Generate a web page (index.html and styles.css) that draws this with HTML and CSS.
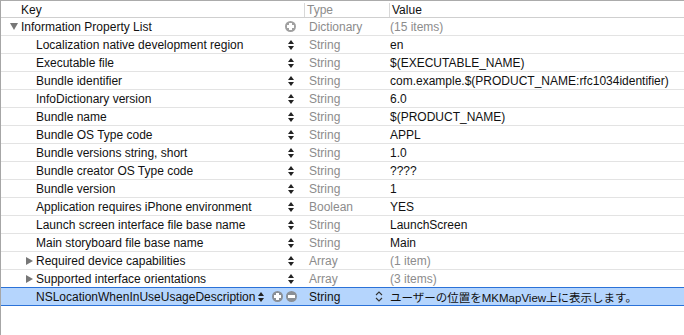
FILE: index.html
```html
<!DOCTYPE html>
<html lang="en">
<head>
  <meta charset="UTF-8" />
  <title>Info.plist</title>
  <link rel="stylesheet" href="styles.css">
</head>
<body>
  <div class="plist">
    <div class="head">
      <div class="cell key">Key</div>
      <div class="cell type sep">Type</div>
      <div class="cell value sep">Value</div>
    </div>

    <div class="row">
      <div class="cell key root"><span class="tri down"></span>Information Property List
        <span class="ctrls"><span class="btn plus"></span></span></div>
      <div class="cell type">Dictionary</div>
      <div class="cell value dim">(15 items)</div>
    </div>

    <div class="row">
      <div class="cell key child">Localization native development region<span class="ctrls"><span class="step"></span></span></div>
      <div class="cell type">String</div>
      <div class="cell value">en</div>
    </div>
    <div class="row">
      <div class="cell key child">Executable file<span class="ctrls"><span class="step"></span></span></div>
      <div class="cell type">String</div>
      <div class="cell value">$(EXECUTABLE_NAME)</div>
    </div>
    <div class="row">
      <div class="cell key child">Bundle identifier<span class="ctrls"><span class="step"></span></span></div>
      <div class="cell type">String</div>
      <div class="cell value">com.example.$(PRODUCT_NAME:rfc1034identifier)</div>
    </div>
    <div class="row">
      <div class="cell key child">InfoDictionary version<span class="ctrls"><span class="step"></span></span></div>
      <div class="cell type">String</div>
      <div class="cell value">6.0</div>
    </div>
    <div class="row">
      <div class="cell key child">Bundle name<span class="ctrls"><span class="step"></span></span></div>
      <div class="cell type">String</div>
      <div class="cell value">$(PRODUCT_NAME)</div>
    </div>
    <div class="row">
      <div class="cell key child">Bundle OS Type code<span class="ctrls"><span class="step"></span></span></div>
      <div class="cell type">String</div>
      <div class="cell value">APPL</div>
    </div>
    <div class="row">
      <div class="cell key child">Bundle versions string, short<span class="ctrls"><span class="step"></span></span></div>
      <div class="cell type">String</div>
      <div class="cell value">1.0</div>
    </div>
    <div class="row">
      <div class="cell key child">Bundle creator OS Type code<span class="ctrls"><span class="step"></span></span></div>
      <div class="cell type">String</div>
      <div class="cell value">????</div>
    </div>
    <div class="row">
      <div class="cell key child">Bundle version<span class="ctrls"><span class="step"></span></span></div>
      <div class="cell type">String</div>
      <div class="cell value">1</div>
    </div>
    <div class="row">
      <div class="cell key child">Application requires iPhone environment<span class="ctrls"><span class="step"></span></span></div>
      <div class="cell type">Boolean</div>
      <div class="cell value">YES</div>
    </div>
    <div class="row">
      <div class="cell key child">Launch screen interface file base name<span class="ctrls"><span class="step"></span></span></div>
      <div class="cell type">String</div>
      <div class="cell value">LaunchScreen</div>
    </div>
    <div class="row">
      <div class="cell key child">Main storyboard file base name<span class="ctrls"><span class="step"></span></span></div>
      <div class="cell type">String</div>
      <div class="cell value">Main</div>
    </div>
    <div class="row">
      <div class="cell key sub"><span class="tri right"></span>Required device capabilities<span class="ctrls"><span class="step"></span></span></div>
      <div class="cell type">Array</div>
      <div class="cell value dim">(1 item)</div>
    </div>
    <div class="row">
      <div class="cell key sub"><span class="tri right"></span>Supported interface orientations<span class="ctrls"><span class="step"></span></span></div>
      <div class="cell type">Array</div>
      <div class="cell value dim">(3 items)</div>
    </div>

    <!-- the row being edited -->
    <div class="row selected">
      <div class="cell key child">NSLocationWhenInUseUsageDescription
        <span class="ctrls"><span class="step"></span><span class="btn plus"></span><span class="btn minus"></span></span></div>
      <div class="cell type">String<span class="chev">
        <svg width="8" height="11" viewBox="0 0 8 11"><path d="M1 4 L4 1 L7 4 M1 7 L4 10 L7 7" fill="none" stroke="#333" stroke-width="1.1"/></svg>
      </span></div>
      <div class="cell value jp">ユーザーの位置をMKMapView上に表示します。</div>
    </div>
  </div>
</body>
</html>
```

FILE: styles.css
```css
* {
  margin: 0;
  padding: 0;
  box-sizing: border-box;
}

body {
  font-family: "Liberation Sans", Arial, "Noto Sans CJK JP", sans-serif;
  font-size: 12px;
  color: #111;
  background: #fff;
  overflow: hidden;
}

.plist {
  width: 684px;
  height: 335px;
  border-top: 1px solid #ababab;
  border-left: 1px solid #a6a6a6;
}

.head,
.row {
  display: grid;
  grid-template-columns: 303px 85px 1fr;
  height: 18px;
  border-bottom: 1px solid #e3e3e3;
}

.head {
  height: 17px;
  border-bottom-color: #cfcfcf;
}

.cell {
  display: flex;
  align-items: center;
  white-space: nowrap;
}

.head .key { padding-left: 20px; }
.head .type { padding-left: 2px; }
.head .value { padding-left: 2px; }

.head .sep {
  border-left: 1px solid #d8d8d8;
  margin: 2px 0;
}

.key.root { padding-left: 9px; }
.key.child { padding-left: 35px; }
.key.sub { padding-left: 25px; }

.type {
  padding-left: 5px;
  color: #8c8c8c;
}

.value { padding-left: 1px; }
.value.dim { color: #8c8c8c; }

.tri {
  display: inline-block;
  width: 0;
  height: 0;
  margin-right: 3px;
}

.tri.down {
  border-left: 4px solid transparent;
  border-right: 4px solid transparent;
  border-top: 7px solid #777;
}

.tri.right {
  border-top: 4px solid transparent;
  border-bottom: 4px solid transparent;
  border-left: 7px solid #777;
}

.ctrls {
  margin-left: auto;
  margin-right: 8px;
  display: flex;
  align-items: center;
  gap: 4px;
}

.step {
  width: 6px;
  height: 12px;
  position: relative;
  margin-right: 2px;
}

.step::before,
.step::after {
  content: "";
  position: absolute;
  left: 0;
  border-left: 3px solid transparent;
  border-right: 3px solid transparent;
}

.step::before {
  top: 1px;
  border-bottom: 4px solid #222;
}

.step::after {
  bottom: 1px;
  border-top: 4px solid #222;
}

.btn {
  width: 11px;
  height: 11px;
  border-radius: 50%;
  background: #8f8f8f;
  position: relative;
}

.btn::before,
.btn::after {
  content: "";
  position: absolute;
  background: #fff;
}

.btn::before {
  left: 2px;
  top: 4px;
  width: 7px;
  height: 3px;
}

.plus::after {
  left: 4px;
  top: 2px;
  width: 3px;
  height: 7px;
}

.row .root .btn {
  background: #a0a0a0;
}

.selected {
  background: #b5d5fd;
  border-top: 1px solid #2b72d8;
  border-bottom: 1px solid #2b72d8;
  margin-top: -1px;
  height: 19px;
}

.selected .type { color: #111; }

.selected .ctrls { gap: 3px; margin-right: 7px; }
.selected .step { margin-right: 5px; }
.selected .btn { background: #8a8f96; }

.chev {
  margin-left: auto;
  margin-right: 6px;
  display: flex;
}

.jp {
  font-size: 11.5px;
}
```
